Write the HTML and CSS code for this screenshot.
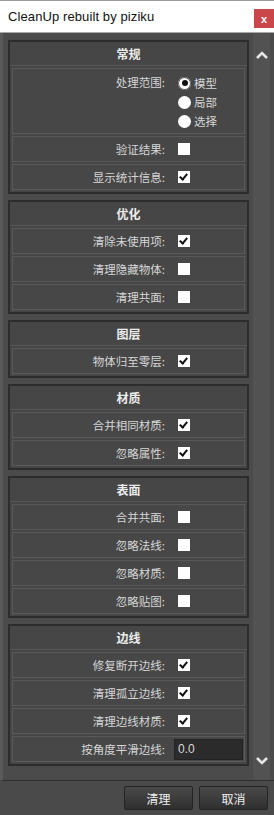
FILE: index.html
```html
<!DOCTYPE html>
<html lang="zh-CN">
<head>
    <meta charset="UTF-8">
    <title>CleanUp rebuilt by piziku</title>
    <link rel="stylesheet" href="styles.css">
</head>
<body>
    <div class="window">
        <div class="titlebar">
            <span class="title">CleanUp rebuilt by piziku</span>
            <button class="close">x</button>
        </div>

        <div class="main">
            <div class="scroll">
                <div class="section">
                    <div class="section-head">常规</div>
                    <div class="section-body">
                        <div class="row row-tall">
                            <span class="label">处理范围:</span>
                            <div class="radios">
                                <label class="radio"><span class="dot checked"></span>模型</label>
                                <label class="radio"><span class="dot"></span>局部</label>
                                <label class="radio"><span class="dot"></span>选择</label>
                            </div>
                        </div>
                        <div class="row"><span class="label">验证结果:</span><span class="check"></span></div>
                        <div class="row"><span class="label">显示统计信息:</span><span class="check on"></span></div>
                    </div>
                </div>

                <div class="section">
                    <div class="section-head">优化</div>
                    <div class="section-body">
                        <div class="row"><span class="label">清除未使用项:</span><span class="check on"></span></div>
                        <div class="row"><span class="label">清理隐藏物体:</span><span class="check"></span></div>
                        <div class="row"><span class="label">清理共面:</span><span class="check"></span></div>
                    </div>
                </div>

                <div class="section">
                    <div class="section-head">图层</div>
                    <div class="section-body">
                        <div class="row"><span class="label">物体归至零层:</span><span class="check on"></span></div>
                    </div>
                </div>

                <div class="section">
                    <div class="section-head">材质</div>
                    <div class="section-body">
                        <div class="row"><span class="label">合并相同材质:</span><span class="check on"></span></div>
                        <div class="row"><span class="label">忽略属性:</span><span class="check on"></span></div>
                    </div>
                </div>

                <div class="section">
                    <div class="section-head">表面</div>
                    <div class="section-body">
                        <div class="row"><span class="label">合并共面:</span><span class="check"></span></div>
                        <div class="row"><span class="label">忽略法线:</span><span class="check"></span></div>
                        <div class="row"><span class="label">忽略材质:</span><span class="check"></span></div>
                        <div class="row"><span class="label">忽略贴图:</span><span class="check"></span></div>
                    </div>
                </div>

                <div class="section">
                    <div class="section-head">边线</div>
                    <div class="section-body">
                        <div class="row"><span class="label">修复断开边线:</span><span class="check on"></span></div>
                        <div class="row"><span class="label">清理孤立边线:</span><span class="check on"></span></div>
                        <div class="row"><span class="label">清理边线材质:</span><span class="check on"></span></div>
                        <div class="row"><span class="label">按角度平滑边线:</span><span class="field">0.0</span></div>
                    </div>
                </div>
            </div>

            <div class="scrollbar">
                <svg class="arrow" width="14" height="10" viewBox="0 0 14 10">
                    <path d="M2 8 L7 3 L12 8" fill="none" stroke="#e6e6e6" stroke-width="2.6"/>
                </svg>
                <svg class="arrow" width="14" height="10" viewBox="0 0 14 10">
                    <path d="M2 2 L7 7 L12 2" fill="none" stroke="#e6e6e6" stroke-width="2.6"/>
                </svg>
            </div>
        </div>

        <div class="footer">
            <button class="btn">清理</button>
            <button class="btn">取消</button>
        </div>
    </div>
</body>
</html>
```

FILE: styles.css
```css
body {
    margin: 0;
    padding: 0;
    background: #4a4a4a;
    font-family: "Noto Sans CJK SC", "Noto Sans", sans-serif;
}

.window {
    width: 274px;
    height: 815px;
    display: flex;
    flex-direction: column;
}

.titlebar {
    height: 31px;
    background: #fff;
    border-top: 1px solid #9a9a9a;
    border-bottom: 1px solid #a8a8a8;
    display: flex;
    align-items: center;
    justify-content: space-between;
    padding-left: 8px;
}

.title {
    font-family: "Liberation Sans", Arial, sans-serif;
    font-size: 13px;
    color: #111;
    letter-spacing: .1px;
}

.close {
    width: 20px;
    height: 19px;
    margin-top: 4px;
    background: #c9474b;
    border: none;
    color: #fff;
    font-family: "Liberation Sans", Arial, sans-serif;
    font-weight: bold;
    font-size: 11px;
    padding: 0;
}

.main {
    flex: 1;
    display: flex;
    background: #4b4b4b;
    border-left: 3px solid #5a5a5a;
    border-bottom: 1px solid #2f2f2f;
}

.scroll {
    width: 241px;
    padding: 7px 0 0 5px;
    display: flex;
    flex-direction: column;
    gap: 6px;
}

.section {
    border: 2px solid #2c2c2c;
    background: #464646;
}

.section-head {
    height: 23px;
    line-height: 23px;
    text-align: center;
    color: #ececec;
    font-size: 12px;
    font-weight: bold;
    border-bottom: 1px solid #575757;
}

.section-body {
    display: flex;
    flex-direction: column;
    gap: 2px;
    padding: 2px;
}

.row {
    height: 24px;
    border: 1px solid #5a5a5a;
    background: #474747;
    display: grid;
    grid-template-columns: 152px 1fr;
    align-items: center;
}

.row-tall {
    height: 64px;
    align-items: start;
}

.label {
    text-align: right;
    color: #d6d6d6;
    font-size: 11.5px;
    line-height: 24px;
}

.row-tall .label {
    line-height: 26px;
}

.check {
    width: 12px;
    height: 12px;
    margin-left: 13px;
    background: #fff;
    position: relative;
}

.check.on::after {
    content: "";
    position: absolute;
    left: 3px;
    top: 1px;
    width: 3px;
    height: 6px;
    border: solid #111;
    border-width: 0 2px 2px 0;
    transform: rotate(40deg);
}

.radios {
    display: flex;
    flex-direction: column;
    padding: 6px 0 0 13px;
    gap: 3px;
}

.radio {
    display: flex;
    align-items: center;
    gap: 3px;
    color: #d6d6d6;
    font-size: 11.5px;
    height: 16px;
}

.dot {
    width: 13px;
    height: 13px;
    border-radius: 50%;
    background: #fff;
    position: relative;
}

.dot.checked {
    box-shadow: inset 0 0 0 1px #555;
}

.dot.checked::after {
    content: "";
    position: absolute;
    left: 3.5px;
    top: 3.5px;
    width: 6px;
    height: 6px;
    border-radius: 50%;
    background: #111;
}

.field {
    margin-left: 9px;
    margin-right: 1px;
    height: 19px;
    line-height: 19px;
    background: #2b2b2b;
    border: 1px solid #232323;
    color: #d8d8d8;
    font-family: "Liberation Sans", Arial, sans-serif;
    font-size: 12px;
    padding-left: 3px;
}

.scrollbar {
    width: 17px;
    margin-left: 4px;
    background: #525252;
    display: flex;
    flex-direction: column;
    justify-content: space-between;
    align-items: center;
    padding: 17px 0 14px;
}

.footer {
    height: 34px;
    background: #4a4a4a;
    display: flex;
    justify-content: flex-end;
    align-items: center;
    gap: 6px;
    padding-right: 6px;
}

.btn {
    width: 69px;
    height: 24px;
    border: 1px solid #242424;
    border-radius: 2px;
    background: linear-gradient(#4a4a4a, #2f2f2f);
    color: #f0f0f0;
    font-family: "Noto Sans CJK SC", sans-serif;
    font-size: 12px;
    padding: 0;
}
```
